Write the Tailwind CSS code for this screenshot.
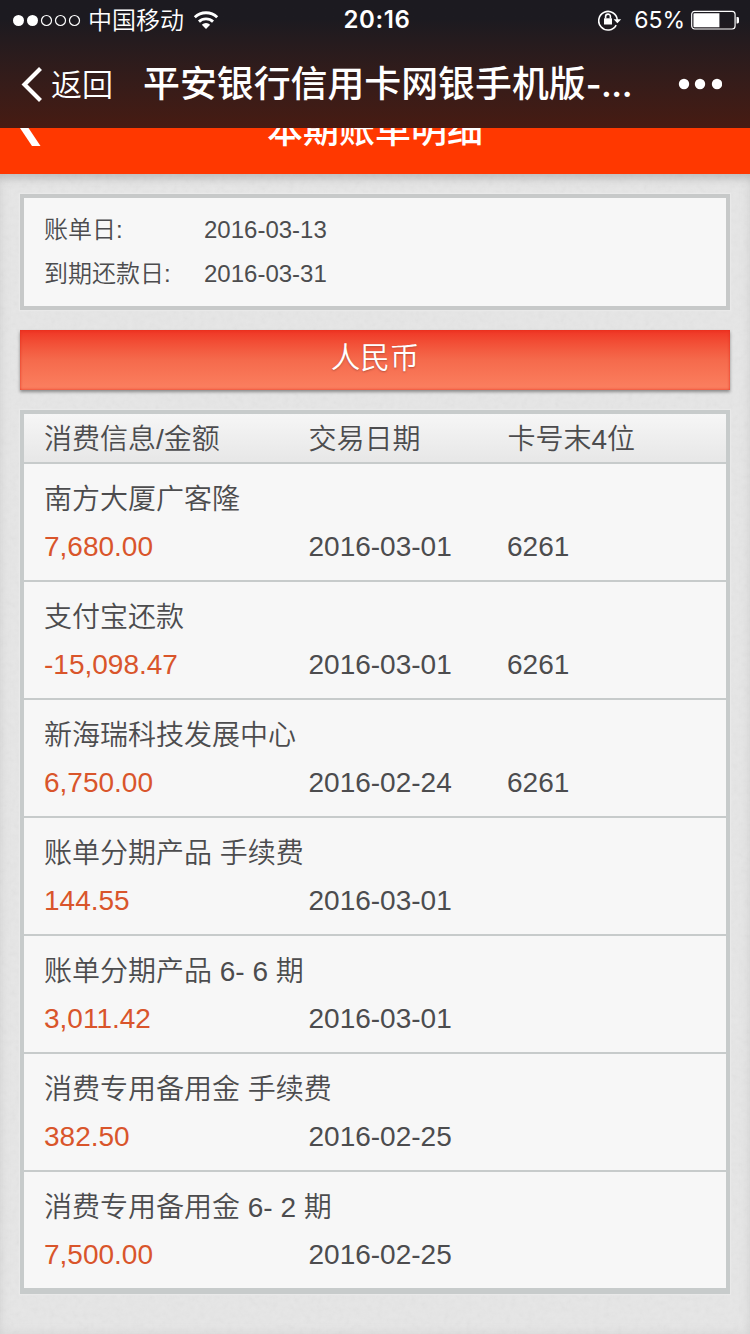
<!DOCTYPE html>
<html lang="zh-CN">
<head>
<meta charset="utf-8">
<title>本期账单明细</title>
<script src="https://cdn.jsdelivr.net/npm/@tailwindcss/browser@4"></script>
</head>
<body class="w-[750px] h-[1334px] overflow-hidden bg-[#e6e6e6] font-['Liberation_Sans','Noto_Sans_CJK_SC',sans-serif] text-[#4c4c4e]">
<div class="flex h-[1334px] flex-col">
  <header class="flex h-32 shrink-0 flex-col bg-linear-to-b from-[#1c1a20] from-15% to-[#471b12] text-white">
    <div class="grid h-10 grid-cols-3 items-center pl-3 pr-[11px]">
      <div class="flex items-center">
        <svg class="mt-px h-4 w-[69px]" viewBox="0 0 69 16" fill="none" stroke="#fff" stroke-width="1.2"><circle cx="6.5" cy="7.5" r="5.5" fill="#fff" stroke="none"/><circle cx="20.5" cy="7.5" r="5.5" fill="#fff" stroke="none"/><circle cx="34.5" cy="7.5" r="5"/><circle cx="48.5" cy="7.5" r="5"/><circle cx="62.5" cy="7.5" r="5"/></svg>
        <span class="ml-[7px] whitespace-nowrap pt-px text-2xl leading-[38px] font-[350]">中国移动</span>
        <svg class="ml-[9px] h-[19px] w-[26px]" viewBox="0 0 26 20" fill="none" stroke="#fff" stroke-width="3"><path d="M1.2 6.6a17 17 0 0 1 23.6 0"/><path d="M5.6 11.2a10.7 10.7 0 0 1 14.8 0"/><path d="M13 19l-4.4-4.5a6.3 6.3 0 0 1 8.8 0z" fill="#fff" stroke="none"/></svg>
      </div>
      <div class="pl-[3px] text-center font-['Inter',sans-serif] text-2xl leading-10 font-semibold tracking-[.6px]">20:16</div>
      <div class="flex items-center justify-end">
        <svg class="-mt-px h-[22px] w-6" viewBox="0 0 24 22" fill="none" stroke="#fff" stroke-width="1.6"><path d="M18.2 16.2A9.3 9.3 0 1 1 19.3 11"/><path d="M15.6 10.2h7.6l-3.8 4z" fill="#fff" stroke="none"/><rect x="6" y="9.3" width="8" height="6.2" fill="#fff" stroke="none"/><path d="M7.6 9.5V7.5a2.4 2.4 0 0 1 4.8 0v2"/></svg>
        <span class="ml-[12px] font-['Inter',sans-serif] text-[23px] leading-10">65%</span>
        <svg class="ml-[6px] h-5 w-[48px]" viewBox="0 0 49 20"><rect x=".7" y="1.2" width="44.3" height="18" rx="3" fill="none" stroke="#fff" stroke-width="1.2"/><path d="M2.500 4q0-1 1-1H29v14.500H3.500q-1 0-1-1z" fill="#fff"/><path d="M46.500 7h1q1.500 0 1.500 1.500v3.500q0 1.500-1.500 1.500h-1z" fill="#fff"/></svg>
      </div>
    </div>
    <div class="flex h-[88px] items-center pl-[21px] pr-7">
      <svg class="mt-px h-9 w-[22px]" viewBox="0 0 22 36" fill="none" stroke="#fff" stroke-width="4.200"><path d="M19.500 1.500L3.500 17.500l16 16"/></svg>
      <span class="ml-2 pt-1 text-[31px] font-[350]">返回</span>
      <h1 class="ml-[30px] flex-1 whitespace-nowrap pt-[2px] text-[36.900px] font-medium">平安银行信用卡网银手机版<span class="font-['Inter','Noto_Sans_CJK_SC',sans-serif] text-[34px] font-semibold tracking-[-.5px]">-...</span></h1>
      <svg class="h-3 w-11" viewBox="0 0 44 12" fill="#fff"><circle cx="6" cy="6" r="5.200"/><circle cx="22" cy="6" r="5.200"/><circle cx="39" cy="6" r="5.200"/></svg>
    </div>
  </header>
  <div class="z-10 flex h-[46px] shrink-0 overflow-hidden bg-[#ff3800] text-white">
    <svg class="ml-5 h-5 w-[22px]" viewBox="0 0 22 20"><path d="M0 0h8.500L20.500 18h-8.500z" fill="#fff"/></svg>
    <h2 class="-mt-[24px] mr-[42px] flex-1 text-center text-4xl leading-[54px] font-medium">本期账单明细</h2>
  </div>
  <main class="relative flex flex-1 flex-col gap-5 px-5 pt-5 shadow-[inset_0_10px_10px_-6px_#bcbcbc,inset_0_0_12px_#d6d6d6]">
    <svg class="absolute inset-0 h-full w-full opacity-8" aria-hidden="true"><filter id="grain"><feTurbulence type="fractalNoise" baseFrequency=".18" numOctaves="3" seed="4"/><feColorMatrix type="saturate" values="0"/></filter><rect width="100%" height="100%" filter="url(#grain)"/></svg>
    <section class="relative grid h-29 grid-cols-[160px_1fr] content-start border-4 border-[#c7c9c9] bg-[#f7f7f7] px-5 pt-[10px] text-2xl leading-[44px] font-[350] shadow-[0_0_1px_1px_#e9e9e9]">
      <span>账单日:</span><span>2016-03-13</span>
      <span>到期还款日:</span><span>2016-03-31</span>
    </section>
    <div class="relative h-[60px] bg-linear-to-b from-[#ef3423] via-[#f56a4c] to-[#fb8060] text-center text-[29.500px] leading-[55px] font-[350] text-white shadow-[0_2px_3px_#898989,inset_0_0_3px_#e32b1c]"><span class="text-shadow-[0_1px_2px_#b9523d]">人民币</span></div>
    <section class="relative flex flex-col border-4 border-[#c7cbcb] bg-[#f7f7f7] text-[28px] font-[350] shadow-[0_0_1px_1px_#e9e9e9]">
      <div class="grid h-[50px] grid-cols-[264.500px_199px_1fr] border-b-2 border-[#c7cbcb] bg-linear-to-b from-[#f6f6f6] to-[#e7e7e7] pl-5 leading-[51px]"><span>消费信息/金额</span><span>交易日期</span><span>卡号末4位</span></div>
      <div id="rows" class="contents"></div>
    </section>
  </main>
</div>
<script>
const rows = [
  ['南方大厦广客隆', '7,680.00', '2016-03-01', '6261'],
  ['支付宝还款', '-15,098.47', '2016-03-01', '6261'],
  ['新海瑞科技发展中心', '6,750.00', '2016-02-24', '6261'],
  ['账单分期产品 手续费', '144.55', '2016-03-01', ''],
  ['账单分期产品 6- 6 期', '3,011.42', '2016-03-01', ''],
  ['消费专用备用金 手续费', '382.50', '2016-02-25', ''],
  ['消费专用备用金 6- 2 期', '7,500.00', '2016-02-25', '']
];
document.getElementById('rows').innerHTML = rows.map(([name, amount, date, card]) => `
  <div class="grid h-[118px] grid-cols-[264.500px_198.500px_1fr] content-start border-b-2 border-[#c7cbcb] pt-[10px] pl-5">
    <div class="col-span-3 leading-[51px]">${name}</div>
    <div class="leading-[43px] text-[#d9552b]">${amount}</div><div class="leading-[43px]">${date}</div><div class="leading-[43px]">${card}</div>
  </div>`).join('');
</script>
</body>
</html>
